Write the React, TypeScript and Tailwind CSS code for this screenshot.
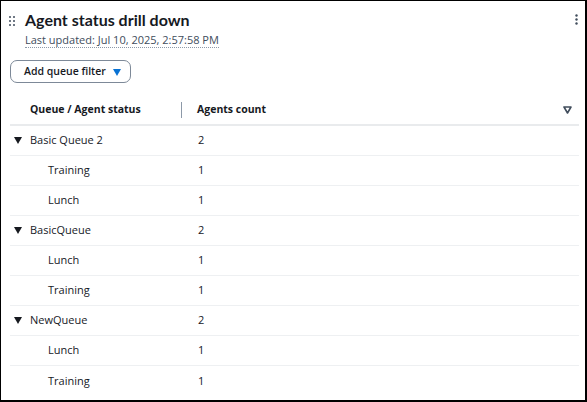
import React from "react";

type Row = { name: string; count: number; group?: boolean };

const rows: Row[] = [
  { name: "Basic Queue 2", count: 2, group: true },
  { name: "Training", count: 1 },
  { name: "Lunch", count: 1 },
  { name: "BasicQueue", count: 2, group: true },
  { name: "Lunch", count: 1 },
  { name: "Training", count: 1 },
  { name: "NewQueue", count: 2, group: true },
  { name: "Lunch", count: 1 },
  { name: "Training", count: 1 },
];

function DragHandle() {
  return (
    <svg width="6" height="10" viewBox="0 0 6 10" className="fill-[#414d5c]">
      <circle cx="1" cy="1" r="1" />
      <circle cx="5" cy="1" r="1" />
      <circle cx="1" cy="5" r="1" />
      <circle cx="5" cy="5" r="1" />
      <circle cx="1" cy="9" r="1" />
      <circle cx="5" cy="9" r="1" />
    </svg>
  );
}

function Kebab() {
  return (
    <svg width="3" height="11" viewBox="0 0 3 11" className="fill-[#414d5c]">
      <circle cx="1.5" cy="1.5" r="1.2" />
      <circle cx="1.5" cy="5.5" r="1.2" />
      <circle cx="1.5" cy="9.5" r="1.2" />
    </svg>
  );
}

function Caret({ className }: { className: string }) {
  return (
    <svg width="8" height="7" viewBox="0 0 8 7" className={className}>
      <path d="M0 0h8L4 7z" />
    </svg>
  );
}

export default function App() {
  return (
    <div
      className="w-[587px] h-[402px] bg-white border-t border-l border-r-2 border-b-2 border-black overflow-hidden text-[#16191f]"
      style={{ fontFamily: '"Open Sans", "Liberation Sans", sans-serif' }}
    >
      <div className="flex items-start pl-[8px] pr-[7px] pt-[9px]">
        <div className="pt-[6px] pr-[10px]">
          <DragHandle />
        </div>
        <div className="flex-1">
          <div
            className="text-[16px] font-bold leading-[20px]"
            style={{ fontFamily: 'Lato, "Open Sans", sans-serif' }}
          >
            Agent status drill down
          </div>
          <div className="mt-[2px] w-fit text-[11px] leading-[15px] text-[#414d5c] border-b border-dotted border-[#8d99a8]">
            Last updated: Jul 10, 2025, 2:57:58 PM
          </div>
        </div>
        <div className="pt-[4px]">
          <Kebab />
        </div>
      </div>

      <div className="pl-[9px] mt-[12px]">
        <button className="flex items-center h-[23px] w-[121px] border border-[#7d8998] rounded-[7px] pl-[13px] text-[10.5px] font-semibold leading-none whitespace-nowrap">
          <span>Add queue filter</span>
          <span className="ml-[7px] mt-[1px]">
            <Caret className="fill-[#0972d3]" />
          </span>
        </button>
      </div>

      <div className="mx-[9px] mt-[13px] w-[569px]">
        <div className="flex items-center h-[30px] border-b-2 border-[#e9ebed] text-[10.5px] font-bold">
          <div className="w-[171px] pl-[20px]">Queue / Agent status</div>
          <div className="w-px h-[16px] bg-[#8d99a8]" />
          <div className="flex-1 pl-[15px]">Agents count</div>
          <div className="pr-[7px]">
            <svg width="9" height="8" viewBox="0 0 9 8">
              <path d="M1 1h7L4.5 7z" fill="none" stroke="#414d5c" strokeWidth="1.6" strokeLinejoin="round" />
            </svg>
          </div>
        </div>
        {rows.map((r, i) => (
          <div
            key={i}
            className={`flex items-center h-[30px] text-[11px] ${i < rows.length - 1 ? "border-b border-[#eef0f2]" : ""}`}
          >
            <div className="w-[188px] flex items-center">
              {r.group ? (
                <>
                  <span className="pl-[4px] w-[20px]">
                    <Caret className="fill-[#16191f]" />
                  </span>
                  <span>{r.name}</span>
                </>
              ) : (
                <span className="pl-[38px]">{r.name}</span>
              )}
            </div>
            <div>{r.count}</div>
          </div>
        ))}
      </div>
    </div>
  );
}
